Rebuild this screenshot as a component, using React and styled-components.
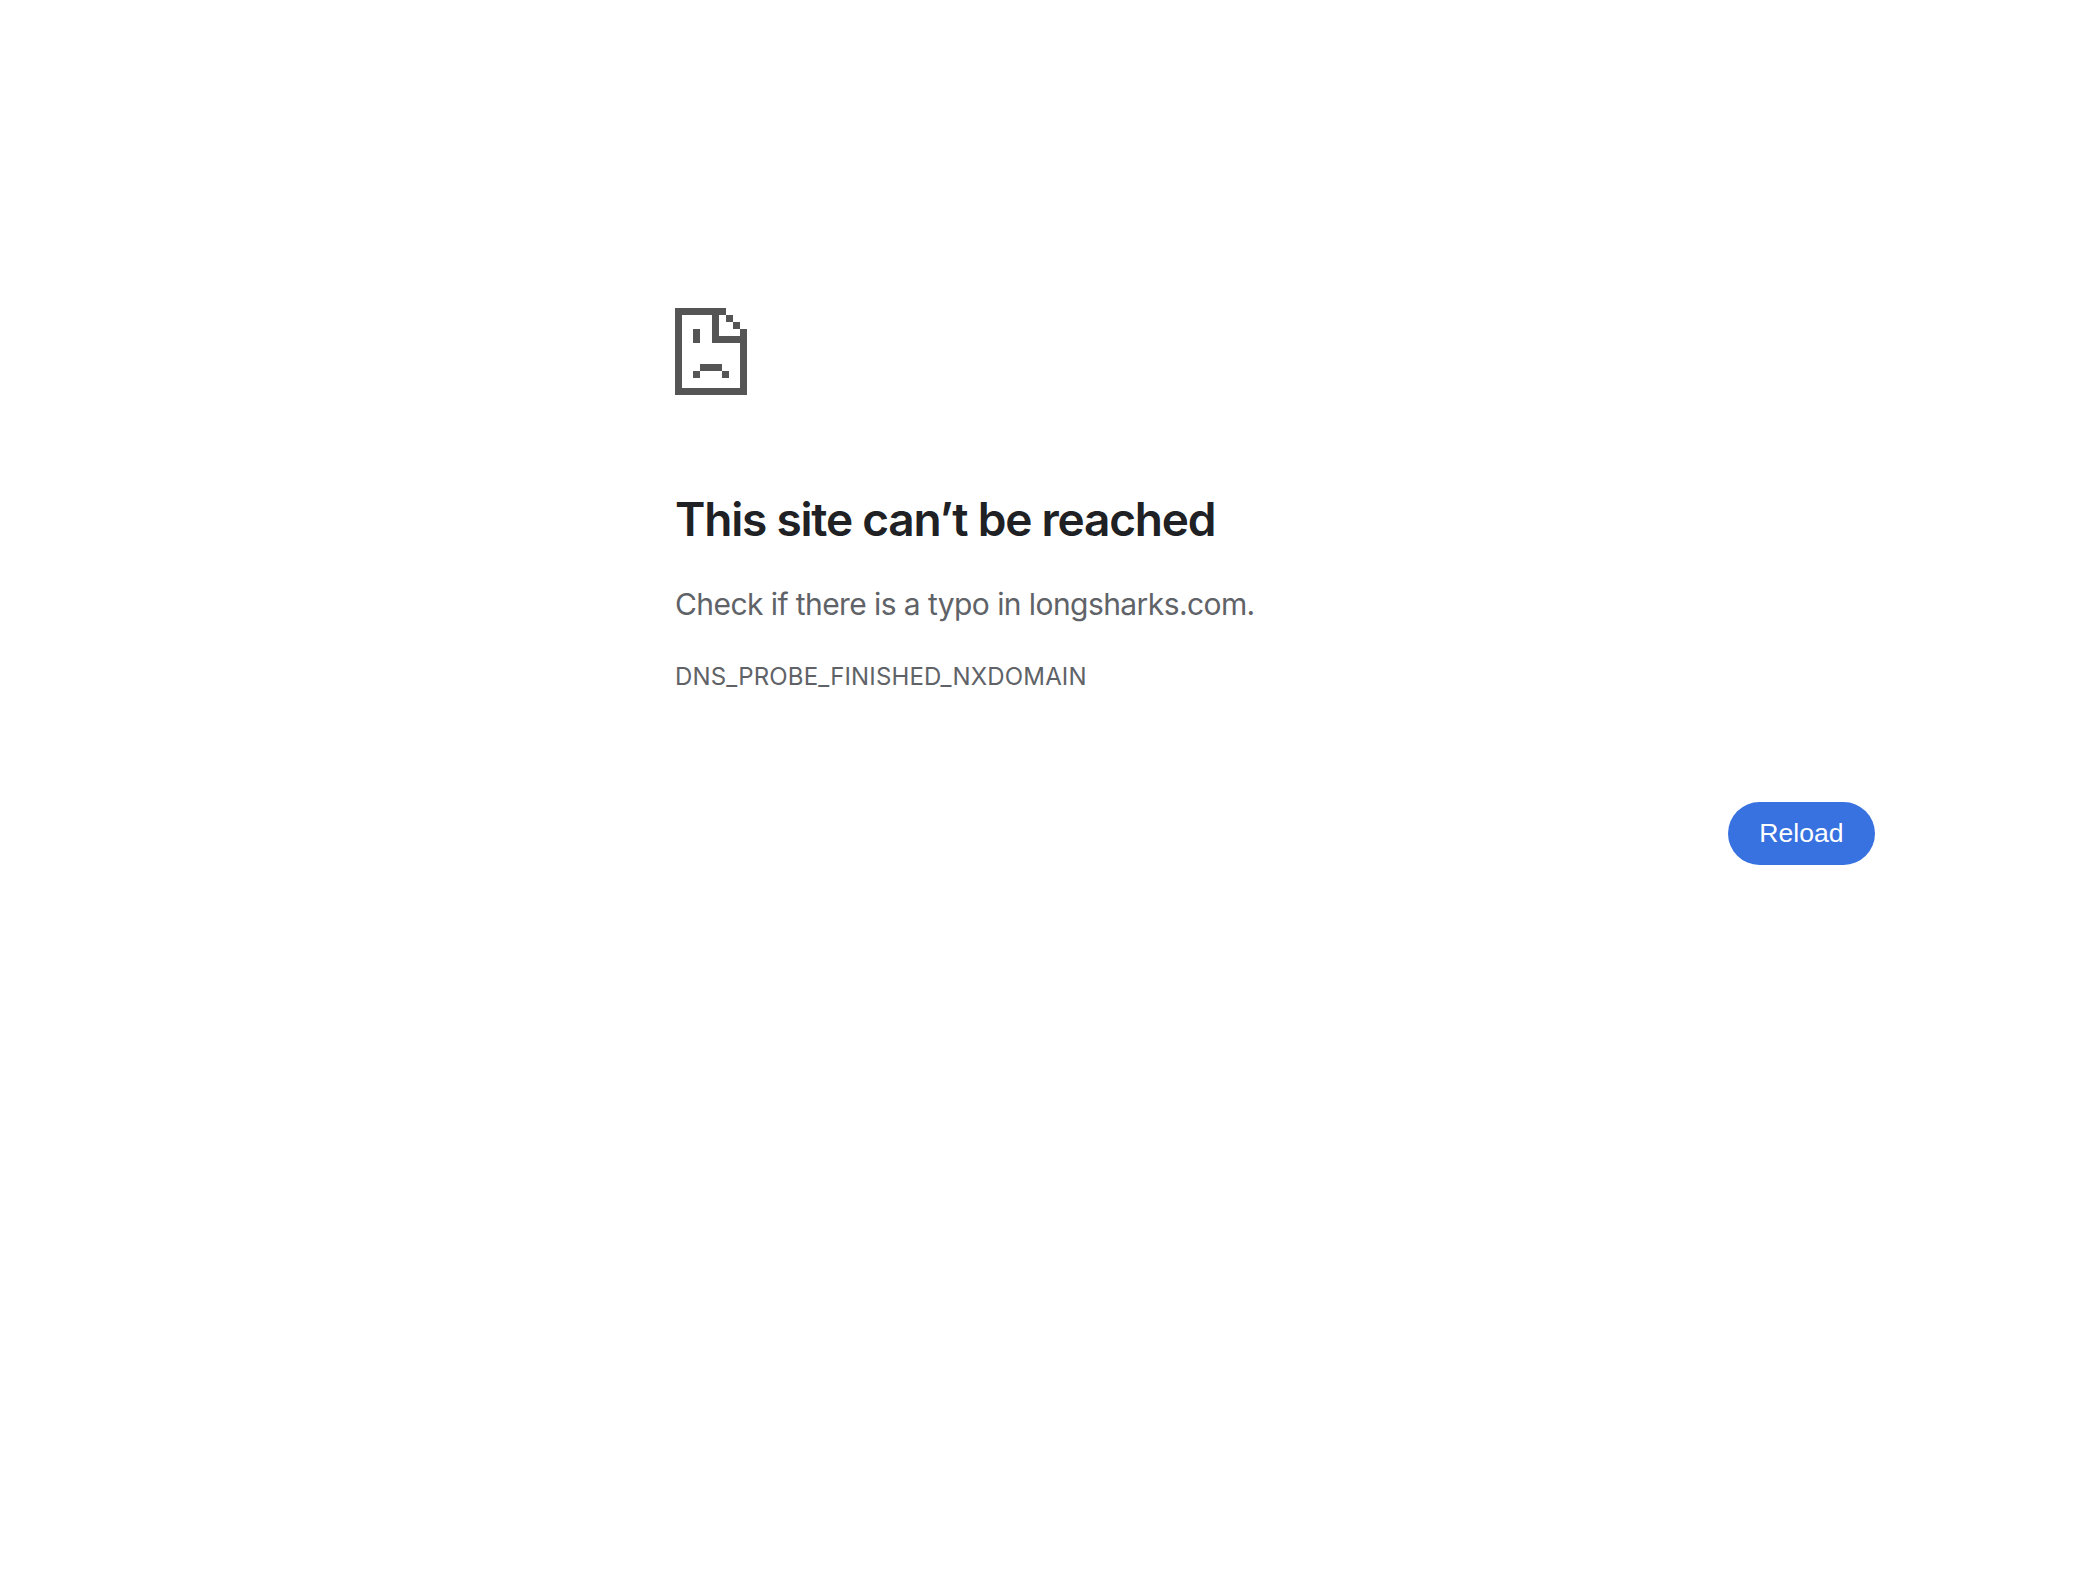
import React from "react";
import styled, { createGlobalStyle } from "styled-components";

const Global = createGlobalStyle`
  html, body { margin: 0; padding: 0; background: #fff; }
`;

const Page = styled.main`
  box-sizing: border-box;
  width: 2088px;
  height: 1590px;
  padding: 308px 213px 0 675px;
  font-family: Inter, "Liberation Sans", sans-serif;
  background: #fff;
`;

const Icon = styled.svg`
  display: block;
  width: 72px;
  height: 87px;
  fill: #555555;
`;

const Heading = styled.h1`
  margin: 96px 0 0;
  font-size: 46px;
  line-height: 56px;
  font-weight: 560;
  color: #202124;
  letter-spacing: -1.2px;
`;

const Message = styled.p`
  margin: 35px 0 0;
  font-size: 30px;
  line-height: 44px;
  font-weight: 400;
  color: #5f6368;
  letter-spacing: -0.58px;
`;

const Code = styled.div`
  margin: 36px 0 0;
  font-size: 24px;
  line-height: 30px;
  color: #5f6368;
  letter-spacing: 0.16px;
`;

const Actions = styled.div`
  display: flex;
  justify-content: flex-end;
  margin-top: 110px;
`;

const ReloadButton = styled.button`
  width: 147px;
  height: 63px;
  border: none;
  border-radius: 32px;
  background: #3871e0;
  color: #fff;
  font-family: "Liberation Sans", Arial, sans-serif;
  font-size: 26.6px;
  padding: 0;
`;

const SadPage = () => (
  <Icon viewBox="0 0 72 87" aria-hidden="true" shapeRendering="crispEdges">
    <rect x="0" y="0" width="51" height="7" />
    <rect x="0" y="0" width="7" height="87" />
    <rect x="0" y="80" width="72" height="7" />
    <rect x="65" y="21" width="7" height="66" />
    <rect x="51" y="7" width="7" height="7" />
    <rect x="58" y="14" width="7" height="7" />
    <rect x="37" y="0" width="7" height="35" />
    <rect x="37" y="28" width="35" height="7" />
    <rect x="18" y="21" width="7" height="14" />
    <rect x="25" y="56" width="22" height="7" />
    <rect x="18" y="63" width="7" height="7" />
    <rect x="47" y="63" width="7" height="7" />
  </Icon>
);

export default function App() {
  return (
    <>
      <Global />
      <Page>
        <SadPage />
        <Heading>This site can’t be reached</Heading>
        <Message>Check if there is a typo in longsharks.com.</Message>
        <Code>DNS_PROBE_FINISHED_NXDOMAIN</Code>
        <Actions>
          <ReloadButton>Reload</ReloadButton>
        </Actions>
      </Page>
    </>
  );
}
